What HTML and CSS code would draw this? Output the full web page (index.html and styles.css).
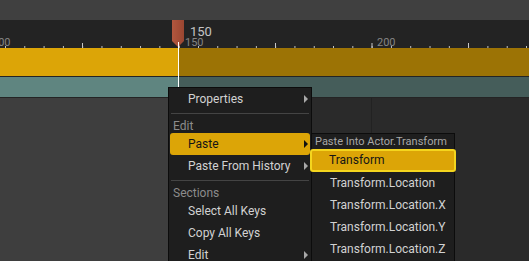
FILE: index.html
```html
<!DOCTYPE html>
<html lang="en">
<head>
<meta charset="UTF-8">
<meta name="viewport" content="width=device-width, initial-scale=1.0">
<title>Sequencer Context Menu</title>
<link rel="stylesheet" href="styles.css">
</head>
<body>

<div class="editor">
    <div class="topbar"></div>

    <!-- Time ruler -->
    <div class="ruler">
        <span class="ruler-label" style="left: -8px">100</span>
        <span class="ruler-label" style="left: 185px">150</span>
        <span class="ruler-label" style="left: 377px">200</span>
        <div class="ticks"></div>
    </div>

    <!-- Tracks -->
    <div class="track track-gold"></div>
    <div class="track-gap"></div>
    <div class="track track-teal"></div>
    <div class="track-gap"></div>

    <div class="lower">
        <div class="lower-left"></div>
        <div class="lower-right">
            <div class="col-line"></div>
        </div>
    </div>

    <!-- Playhead -->
    <div class="playhead">
        <svg class="playhead-marker" width="12" height="27" viewBox="0 0 12 27">
            <defs>
                <linearGradient id="mk" x1="0" y1="0" x2="1" y2="0">
                    <stop offset="0" stop-color="#b2573e"/>
                    <stop offset="1" stop-color="#9a4631"/>
                </linearGradient>
            </defs>
            <polygon points="0,0 12,0 12,21 6,27 0,21" fill="url(#mk)"/>
        </svg>
        <span class="playhead-label">150</span>
        <div class="playhead-line"></div>
    </div>

    <!-- Context menu -->
    <div class="menu">
        <div class="menu-item has-sub">Properties</div>
        <div class="menu-sep"></div>
        <div class="menu-header">Edit</div>
        <div class="menu-item has-sub active">Paste</div>
        <div class="menu-item has-sub">Paste From History</div>
        <div class="menu-sep"></div>
        <div class="menu-header">Sections</div>
        <div class="menu-item">Select All Keys</div>
        <div class="menu-item">Copy All Keys</div>
        <div class="menu-item has-sub">Edit</div>
    </div>

    <!-- Paste submenu -->
    <div class="submenu">
        <div class="submenu-header">Paste Into Actor.Transform</div>
        <div class="submenu-item focused">Transform</div>
        <div class="submenu-item">Transform.Location</div>
        <div class="submenu-item">Transform.Location.X</div>
        <div class="submenu-item">Transform.Location.Y</div>
        <div class="submenu-item">Transform.Location.Z</div>
    </div>
</div>

</body>
</html>
```

FILE: styles.css
```css
/* Basic Reset */
body {
    margin: 0;
    padding: 0;
    font-family: Roboto, "Liberation Sans", sans-serif;
    background-color: #2a2a2a;
    overflow: hidden;
}

.editor {
    position: relative;
    width: 529px;
    height: 261px;
    display: flex;
    flex-direction: column;
    overflow: hidden;
}

/* Header strip and ruler */
.topbar {
    height: 20px;
    background: #404040;
}

.ruler {
    position: relative;
    height: 28px;
    background: #232323;
}

.ruler-label {
    position: absolute;
    top: 17px;
    font-size: 11px;
    line-height: 11px;
    color: #858585;
}

.ticks {
    position: absolute;
    left: 0;
    right: 0;
    bottom: 0;
    height: 5px;
    background-image:
        linear-gradient(90deg, #c8c8c8 1px, transparent 1px),
        linear-gradient(90deg, #c8c8c8 1px, transparent 1px);
    background-size: 96.5px 5px, 19.3px 2px;
    background-position: 82px 0, 5px 3px;
    background-repeat: repeat-x;
}

/* Tracks */
.track-gold {
    height: 28px;
    background: linear-gradient(90deg, #dca507 178px, #9c7305 178px);
}

.track-teal {
    height: 20px;
    background: linear-gradient(90deg, #5f8580 178px, #455d5a 178px);
}

.track-gap {
    height: 1px;
    background: #242424;
}

.lower {
    flex: 1;
    display: flex;
}

.lower-left {
    width: 178px;
    background: #3e3e3e;
}

.lower-right {
    flex: 1;
    position: relative;
    background: #2a2a2a;
}

.col-line {
    position: absolute;
    left: 193px;
    top: 0;
    bottom: 0;
    width: 1px;
    background: #222222;
}

/* Playhead */
.playhead-marker {
    position: absolute;
    left: 172px;
    top: 20px;
    display: block;
}

.playhead-label {
    position: absolute;
    left: 190px;
    top: 25px;
    font-size: 13px;
    line-height: 13px;
    color: #c4c4c4;
}

.playhead-line {
    position: absolute;
    left: 178px;
    top: 42px;
    bottom: 0;
    width: 1px;
    background: #ffffff;
}

/* Context menu */
.menu,
.submenu {
    position: absolute;
    width: 142px;
    background: #1e1e1e;
    border: 1px solid #0c0c0c;
    color: #d2d2d2;
    font-size: 12px;
}

.menu {
    left: 168px;
    top: 87px;
    height: 190px;
    padding: 0 1px;
    width: 140px;
}

.menu-item {
    position: relative;
    height: 22px;
    line-height: 22px;
    padding-left: 18px;
    border-radius: 3px;
    white-space: nowrap;
}

.menu-item.has-sub::after {
    content: "";
    position: absolute;
    right: 2px;
    top: 7px;
    border-left: 4px solid #a8a8a8;
    border-top: 4px solid transparent;
    border-bottom: 4px solid transparent;
}

.menu-item.active {
    background: #dca507;
    color: #151515;
}

.menu-item.active::after {
    border-left-color: #111111;
}

.menu-sep {
    height: 1px;
    margin: 3px 1px;
    background: #444444;
}

.menu-header {
    height: 16px;
    line-height: 18px;
    padding-left: 3px;
    color: #8c8c8c;
    font-size: 12px;
}

/* Paste submenu */
.submenu {
    left: 311px;
    top: 133px;
    height: 140px;
}

.submenu-header {
    height: 15px;
    line-height: 15px;
    padding-left: 3px;
    font-size: 11px;
    color: #a8a8a8;
    white-space: nowrap;
}

.submenu-item {
    height: 22px;
    line-height: 22px;
    padding-left: 18px;
    white-space: nowrap;
}

.submenu-item.focused {
    height: 19px;
    line-height: 19px;
    margin: 0 -2px 0 -2px;
    padding-left: 17px;
    background: #dca507;
    border: 2px solid #f4d51e;
    border-radius: 3px;
    color: #151515;
}
```
